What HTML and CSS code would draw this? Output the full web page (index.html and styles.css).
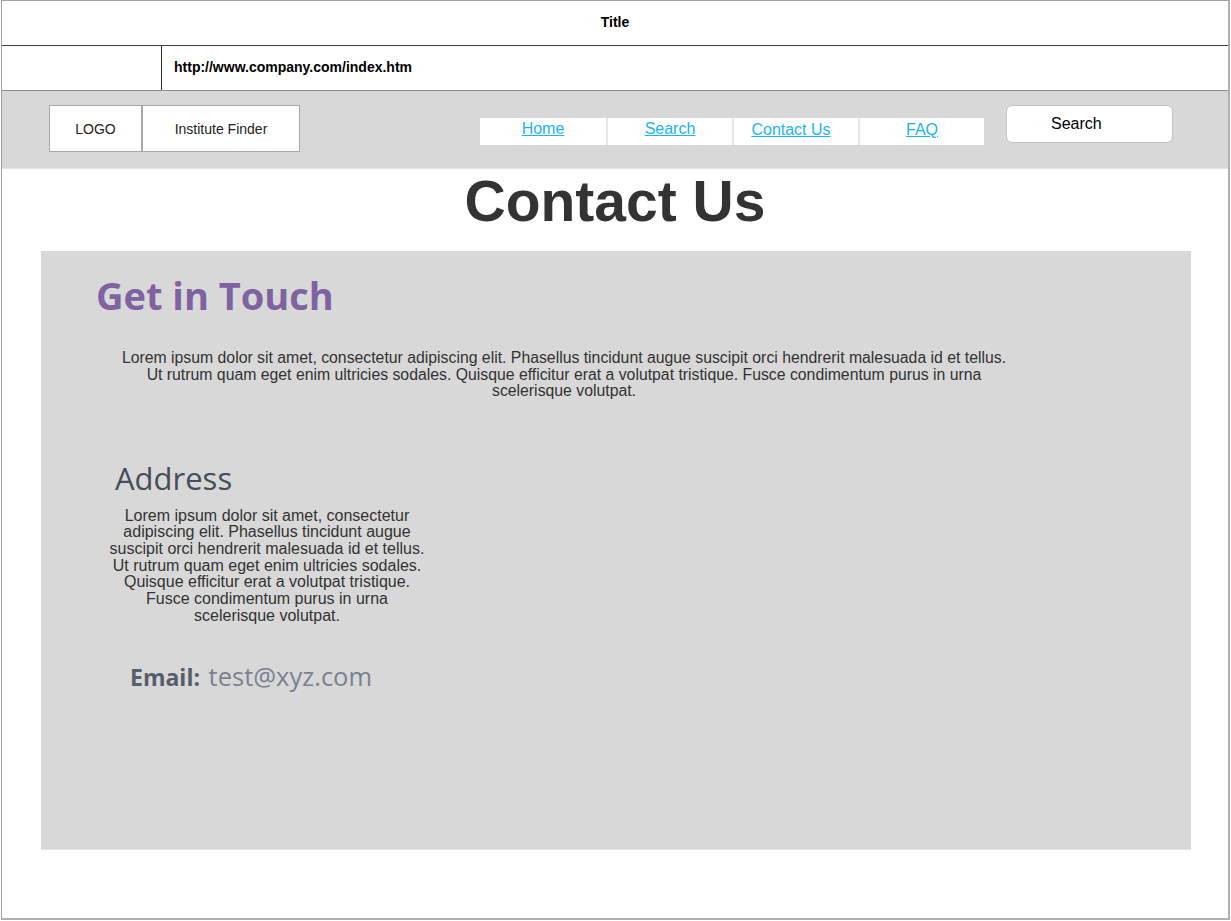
FILE: index.html
```html
<!DOCTYPE html>
<html>
<head>
<meta charset="utf-8">
<link rel="stylesheet" href="styles.css">
</head>
<body>
<div class="frame">
  <div class="titlebar">Title</div>
  <div class="urlbar">
    <div class="url-left"></div>
    <div class="url-text">http://www.company.com/index.htm</div>
  </div>
  <div class="navbar">
    <div class="brand">
      <div class="logo">LOGO</div>
      <div class="site">Institute Finder</div>
    </div>
    <div class="links">
      <a class="link" href="#">Home</a>
      <a class="link" href="#">Search</a>
      <a class="link low shift" href="#">Contact Us</a>
      <a class="link low" href="#">FAQ</a>
    </div>
    <div class="searchbox">Search</div>
  </div>
  <h1 class="pagetitle">Contact Us</h1>
  <div class="panel">
    <h2 class="touch">Get in Touch</h2>
    <p class="intro">Lorem ipsum dolor sit amet, consectetur adipiscing elit. Phasellus tincidunt augue suscipit orci hendrerit malesuada id et tellus. Ut rutrum quam eget enim ultricies sodales. Quisque efficitur erat a volutpat tristique. Fusce condimentum purus in urna scelerisque volutpat.</p>
    <h3 class="addr-title">Address</h3>
    <p class="addr">Lorem ipsum dolor sit amet, consectetur adipiscing elit. Phasellus tincidunt augue suscipit orci hendrerit malesuada id et tellus. Ut rutrum quam eget enim ultricies sodales. Quisque efficitur erat a volutpat tristique. Fusce condimentum purus in urna scelerisque volutpat.</p>
    <div class="email"><span class="email-label">Email:</span> <span class="email-value">test@xyz.com</span></div>
  </div>
</div>
</body>
</html>
```
FILE: styles.css
```css
html, body {
  margin: 0;
  padding: 0;
  background: #ffffff;
}
body {
  font-family: "Liberation Sans", Arial, sans-serif;
}
.frame {
  box-sizing: border-box;
  width: 1229px;
  height: 920px;
  margin-left: 1px;
  border: 1px solid #a0a0a0;
  border-right-width: 2px;
  border-bottom-width: 2px;
  border-right-color: #b0b0b0;
  border-bottom-color: #b0b0b0;
}
.titlebar {
  box-sizing: border-box;
  height: 45px;
  border-bottom: 1px solid #404040;
  display: flex;
  align-items: center;
  justify-content: center;
  font-weight: bold;
  font-size: 14px;
  color: #000;
  padding-bottom: 2px;
}
.urlbar {
  height: 44px;
  border-bottom: 1px solid #909090;
  display: flex;
}
.url-left {
  width: 159px;
  border-right: 1px solid #303030;
}
.url-text {
  padding-left: 12px;
  display: flex;
  align-items: center;
  font-weight: bold;
  font-size: 14px;
  color: #000;
  padding-bottom: 2px;
}
.navbar {
  height: 77px;
  background: #d8d8d8;
  display: flex;
  align-items: flex-start;
  border-bottom: 1px solid #e4e4e4;
}
.brand {
  display: flex;
  margin-left: 47px;
  margin-top: 14px;
}
.logo, .site {
  box-sizing: border-box;
  height: 47px;
  background: #fff;
  border: 1px solid #a8a8a8;
  display: flex;
  align-items: center;
  justify-content: center;
  font-size: 14px;
  color: #222;
}
.logo { width: 93px; }
.site { width: 158px; }
.links {
  display: flex;
  margin-left: 180px;
  margin-top: 27px;
  background: #fff;
  height: 27px;
}
.link {
  box-sizing: border-box;
  width: 126px;
  display: flex;
  justify-content: center;
  padding-top: 2px;
  font-size: 16px;
  color: #1ab4f0;
  text-decoration: underline;
  border-left: 2px solid #e6e6e6;
}
.link:first-child { border-left: none; }
.link.low { padding-top: 3px; }
.link.shift { padding-right: 10px; }
.searchbox {
  box-sizing: border-box;
  width: 167px;
  height: 38px;
  margin-left: 22px;
  margin-top: 14px;
  background: #fff;
  border: 1px solid #c4c4c4;
  border-radius: 6px;
  font-size: 16px;
  color: #000;
  padding-left: 44px;
  padding-top: 9px;
}
.pagetitle {
  margin: 0;
  text-align: center;
  font-size: 57px;
  font-weight: bold;
  color: #333333;
  line-height: 64px;
  padding-bottom: 18px;
}
.panel {
  box-sizing: border-box;
  margin-left: 39px;
  width: 1150px;
  height: 599px;
  background: #d8d8d8;
  border-bottom: 1px solid #e2e2e2;
  padding-top: 20px;
}
.touch {
  margin: 0 0 0 55px;
  font-family: "Open Sans", sans-serif;
  font-weight: bold;
  font-size: 38px;
  line-height: 48px;
  color: #7f63a0;
}
.intro {
  margin: 31px 0 0 73px;
  width: 900px;
  text-align: center;
  font-size: 15.8px;
  line-height: 16.5px;
  color: #333;
}
.addr-title {
  margin: 58px 0 0 74px;
  font-family: "Open Sans", sans-serif;
  font-weight: normal;
  font-size: 31px;
  line-height: 40px;
  color: #474e5a;
}
.addr {
  margin: 10px 0 0 68px;
  width: 316px;
  text-align: center;
  font-size: 16px;
  line-height: 16.67px;
  color: #333;
}
.email {
  margin: 36px 0 0 89px;
  font-family: "Open Sans", sans-serif;
  font-size: 25.5px;
  line-height: 32px;
}
.email-label {
  font-weight: bold;
  color: #565e6c;
  font-size: 23px;
  margin-right: 2px;
}
.email-value {
  color: #7a8290;
}
```
